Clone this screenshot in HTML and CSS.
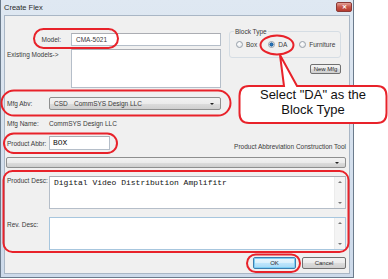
FILE: index.html
```html
<!DOCTYPE html>
<html lang="en">
<head>
    <meta charset="UTF-8">
    <title>Create Flex</title>
    <link rel="stylesheet" href="styles.css">
</head>
<body>
    <div class="window">
        <div class="titlebar">
            <span class="title">Create Flex</span>
            <span class="close">&#x2715;</span>
        </div>
        <div class="client">
            <div class="top">
                <div class="top-left">
                    <div class="row model-row">
                        <span class="lbl">Model:</span>
                        <div class="field model">CMA-5021</div>
                    </div>
                    <div class="row existing-row">
                        <span class="lbl">Existing Models-&gt;</span>
                        <div class="field list"></div>
                    </div>
                </div>
                <div class="top-right">
                    <fieldset class="group">
                        <legend>Block Type</legend>
                        <div class="radios">
                            <span class="radio"><span class="dot"></span>Box</span>
                            <span class="radio checked"><span class="dot"></span>DA</span>
                            <span class="radio"><span class="dot"></span>Furniture</span>
                        </div>
                    </fieldset>
                    <div class="btn new-mfg">New Mfg</div>
                </div>
            </div>

            <div class="row mfg-row">
                <span class="lbl">Mfg Abv:</span>
                <div class="select mfg"><span class="code">CSD</span>CommSYS Design LLC<span class="arrow"></span></div>
            </div>
            <div class="row name-row">
                <span class="lbl">Mfg Name:</span>
                <span>CommSYS Design LLC</span>
            </div>
            <div class="row abbr-row">
                <span class="lbl">Product Abbr:</span>
                <div class="field abbr mono">BOX</div>
                <span class="tool-label">Product Abbreviation Construction Tool</span>
            </div>
            <div class="select wide"><span class="arrow"></span></div>

            <div class="row desc-row">
                <span class="lbl">Product Desc:</span>
                <div class="field memo mono">Digital Video Distribution Amplifitr
                    <div class="scroll"><span class="up"></span><span class="down"></span></div>
                </div>
            </div>
            <div class="row desc-row rev">
                <span class="lbl">Rev. Desc:</span>
                <div class="field memo">
                    <div class="scroll"><span class="up"></span><span class="down"></span></div>
                </div>
            </div>

            <div class="buttons">
                <div class="btn ok">OK</div>
                <div class="btn cancel">Cancel</div>
            </div>
        </div>
    </div>

    <!-- red annotations drawn over the dialog -->
    <svg class="marks" width="388" height="279" viewBox="0 0 388 279">
        <path class="callout" d="M249 86 H284 L280 55 L297 86 H377 Q386.5 86 386.5 96 V113 Q386.5 123 377 123 H249 Q239.5 123 239.5 113 V96 Q239.5 86 249 86 Z"/>
        <rect x="34" y="29" width="84" height="19" rx="9.5"/>
        <ellipse cx="277" cy="45" rx="16.5" ry="9.5"/>
        <rect x="1.5" y="90.5" width="229" height="25" rx="12.5"/>
        <rect x="4" y="133.5" width="113" height="19.5" rx="9.75"/>
        <rect x="3.5" y="171" width="345" height="81" rx="9"/>
        <rect x="247" y="254.5" width="53" height="17.5" rx="8.75"/>
    </svg>
    <div class="callout-text">Select "DA" as the<br>Block Type</div>
</body>
</html>
```

FILE: styles.css
```css
body {
    margin: 0;
    width: 388px;
    height: 279px;
    overflow: hidden;
    position: relative;
    background: #fff;
    font-family: "Liberation Sans", Arial, sans-serif;
    font-size: 6.5px;
    color: #3a3a3a;
}
.window {
    box-sizing: border-box;
    width: 354px;
    height: 278px;
    border: 1px solid #6b7b8c;
    border-top: none;
    padding: 0 3px 3px;
    background: linear-gradient(#dfe8f2, #cddaea);
    display: flex;
    flex-direction: column;
}
.titlebar {
    height: 15px;
    flex: none;
    display: flex;
    align-items: center;
    justify-content: space-between;
    margin-right: -2px;
}
.title {
    font-size: 7.5px;
    color: #2a2a2a;
}
.close {
    width: 16px;
    height: 10px;
    margin-top: -2px;
    border: 1px solid #8a3a36;
    border-radius: 2px;
    box-sizing: border-box;
    background: linear-gradient(#e3a198, #c75548 50%, #b63a2e);
    color: #fff;
    font-size: 6px;
    font-weight: bold;
    line-height: 8px;
    text-align: center;
}
.client {
    flex: 1;
    background: #f0f0f0;
    border: 1px solid #a9b6c5;
    padding-top: 17px;
}
.row {
    display: flex;
}
.lbl {
    flex: none;
    width: 44px;
    padding-left: 2px;
    box-sizing: border-box;
}
.field {
    box-sizing: border-box;
    background: #fff;
    border: 1px solid #b5bec9;
    border-top-color: #abadb3;
}
.mono {
    font-family: "Liberation Mono", "Courier New", monospace;
    font-size: 8px;
    color: #111;
}

/* top part */
.top {
    display: flex;
    height: 56px;
}
.top-left {
    width: 216px;
    flex: none;
}
.model-row {
    height: 13px;
    align-items: center;
}
.model-row .lbl {
    width: 66px;
    text-align: right;
    padding-right: 10px;
}
.model {
    width: 150px;
    height: 13px;
    padding-left: 4px;
    line-height: 11px;
}
.existing-row {
    margin-top: 3px;
}
.existing-row .lbl {
    width: 66px;
    padding-top: 2px;
}
.list {
    width: 150px;
    height: 39px;
}
.top-right {
    margin-left: 8px;
    margin-top: -6px;
    width: 112px;
    display: flex;
    flex-direction: column;
    align-items: flex-end;
}
.group {
    box-sizing: border-box;
    width: 112px;
    height: 31px;
    margin: 0;
    padding: 0 4px;
    border: 1px solid #d5dde4;
    border-radius: 3px;
}
.group legend {
    padding: 0 1px;
    margin-left: 0;
    line-height: 9px;
}
.radios {
    display: flex;
    align-items: center;
    height: 17px;
    gap: 8px;
    padding-left: 2px;
}
.radio {
    display: flex;
    align-items: center;
    gap: 3px;
}
.radio:nth-child(2) {
    margin-left: 3px;
}
.radio:nth-child(3) {
    margin-left: 4px;
}
.dot {
    box-sizing: border-box;
    width: 7px;
    height: 7px;
    border-radius: 50%;
    border: 1px solid #97a0aa;
    background: radial-gradient(circle at 40% 35%, #fff, #dde1e5);
}
.radio.checked .dot {
    background: radial-gradient(circle, #2a79c0 0, #1c5f9f 1.8px, #eef2f5 2.3px);
}
.btn {
    box-sizing: border-box;
    border: 1px solid #707070;
    border-radius: 2px;
    background: linear-gradient(#f3f3f3, #ebebeb 50%, #dcdcdc 51%, #cfcfcf);
    text-align: center;
    color: #2a2a2a;
}
.new-mfg {
    width: 31px;
    height: 10px;
    margin-top: 6px;
    line-height: 8px;
    font-size: 6px;
}

/* selects */
.select {
    box-sizing: border-box;
    position: relative;
    border: 1px solid #8e8f8f;
    border-radius: 2px;
    background: linear-gradient(#f2f2f2, #ebebeb 50%, #dddddd 51%, #cfcfcf);
}
.arrow {
    position: absolute;
    right: 6px;
    top: 50%;
    margin-top: -1px;
    border-left: 2px solid transparent;
    border-right: 2px solid transparent;
    border-top: 2.5px solid #222;
}
.mfg-row {
    margin-top: 8px;
    height: 13px;
    align-items: center;
}
.mfg {
    width: 172px;
    height: 13px;
    line-height: 11px;
    padding-left: 4px;
}
.code {
    display: inline-block;
    width: 20px;
}
.name-row {
    margin-top: 8px;
    height: 10px;
    align-items: center;
}
.abbr-row {
    margin-top: 8px;
    height: 14px;
    align-items: center;
}
.abbr {
    width: 61px;
    height: 14px;
    padding-left: 3px;
    line-height: 12px;
}
.tool-label {
    margin-left: auto;
    margin-right: 3px;
    align-self: flex-end;
    line-height: 8px;
    margin-bottom: -1px;
}
.wide {
    height: 11px;
    margin: 7px 3px 0 1px;
}

/* description boxes */
.desc-row {
    margin-top: 8px;
    padding-right: 3px;
}
.desc-row .lbl {
    padding-top: 1px;
}
.rev .lbl {
    padding-top: 4px;
}
.memo {
    position: relative;
    flex: 1;
    height: 33px;
    padding: 1px 12px 0 4px;
    line-height: 9px;
}
.rev .memo {
    border-color: #a7c6de;
}
.scroll {
    position: absolute;
    top: 0;
    right: 0;
    bottom: 0;
    width: 10px;
    background: #f4f4f4;
    border-left: 1px solid #ececec;
}
.scroll .up,
.scroll .down {
    position: absolute;
    left: 3px;
    border-left: 2px solid transparent;
    border-right: 2px solid transparent;
}
.scroll .up {
    top: 4px;
    border-bottom: 2px solid #777;
}
.scroll .down {
    bottom: 4px;
    border-top: 2px solid #777;
}

/* dialog buttons */
.buttons {
    display: flex;
    justify-content: flex-end;
    gap: 6px;
    margin-top: 7px;
    padding-right: 3px;
}
.buttons .btn {
    height: 12px;
    line-height: 10px;
    font-size: 6px;
}
.ok {
    width: 43px;
    border-color: #3c7fb1;
    box-shadow: inset 0 0 0 1px #7fd0f5;
    background: linear-gradient(#eaf6fd, #d9f0fc 50%, #bee6fd 51%, #a7d9f5);
}
.cancel {
    width: 44px;
}

/* annotations */
.marks {
    position: absolute;
    left: 0;
    top: 0;
    fill: none;
    stroke: #e8222a;
    stroke-width: 2;
}
.marks .callout {
    fill: #fff;
}
.callout-text {
    position: absolute;
    left: 239px;
    top: 87px;
    width: 148px;
    text-align: center;
    font-size: 13px;
    line-height: 15px;
    color: #111;
}
```
